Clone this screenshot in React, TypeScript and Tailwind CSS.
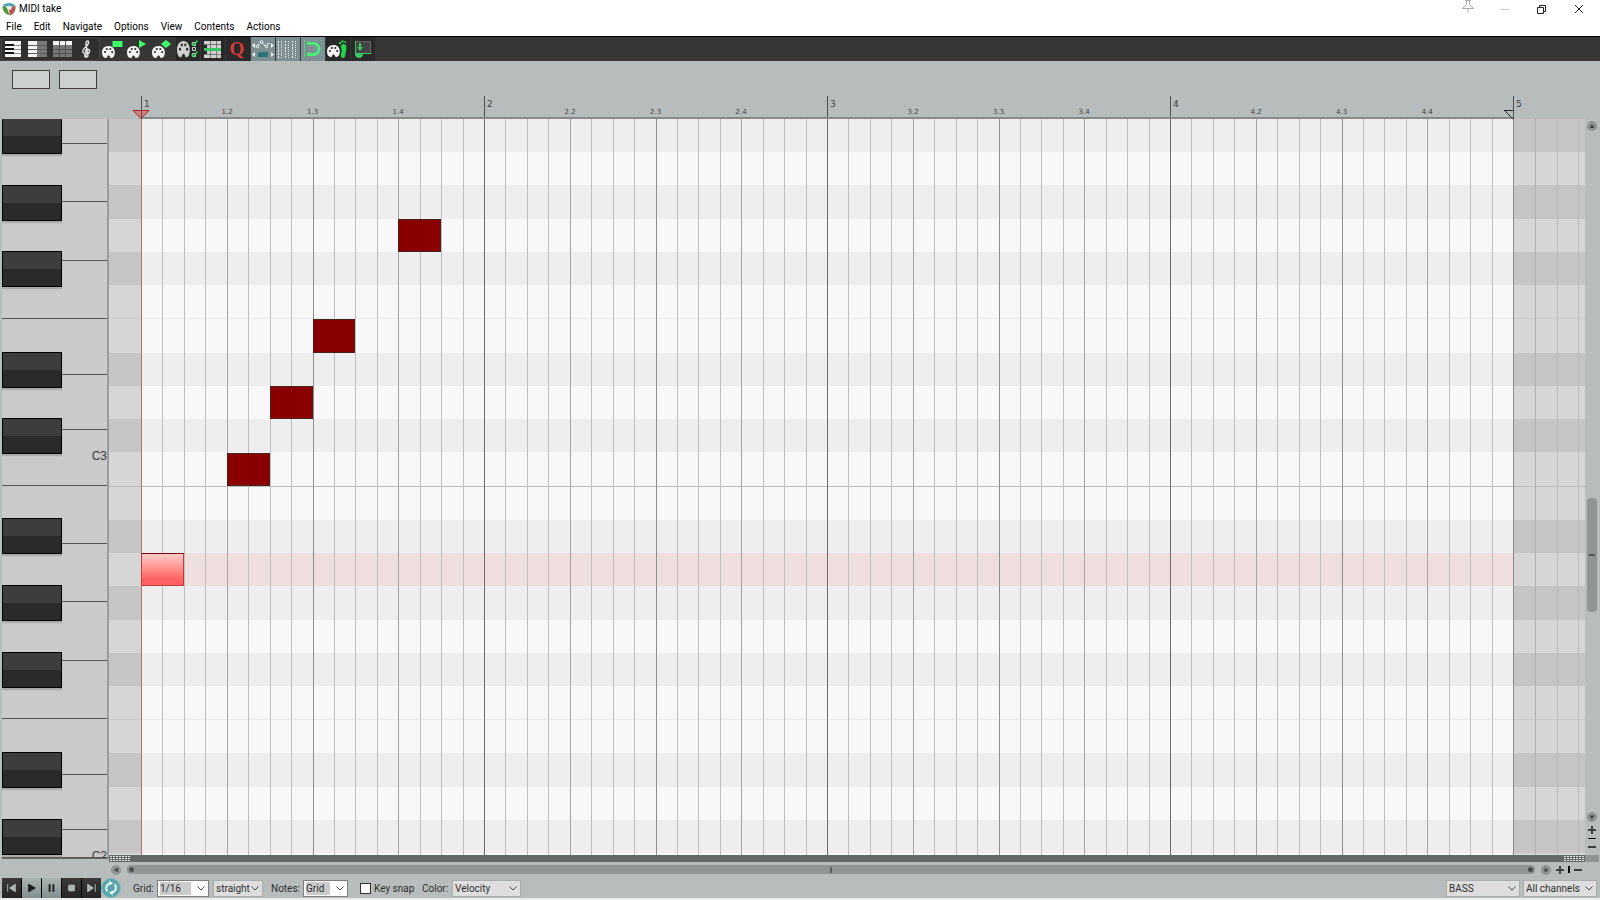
import React from 'react';

const MENUS = ['File', 'Edit', 'Navigate', 'Options', 'View', 'Contents', 'Actions'];

const BARS = [1, 2, 3, 4];
const STEPS_PER_BAR = 16;
const STEPS = BARS.length * STEPS_PER_BAR;

// Rows run downwards from A#3, 22 full semitones are in view
const ROW_COUNT = 22;
const BLACK_ROWS = [0, 2, 4, 7, 9, 12, 14, 16, 19, 21];
const SELECTED_ROW = 13;

interface Note {
  row: number;
  start: number;
  selected?: boolean;
}

const NOTES: Note[] = [
  { row: 13, start: 0, selected: true },
  { row: 10, start: 4 },
  { row: 8, start: 6 },
  { row: 6, start: 8 },
  { row: 3, start: 12 },
];

// Relative heights of the visible white keys
const WHITE_KEYS = [
  { size: 45, wide: false },
  { size: 105, wide: false },
  { size: 105, wide: false },
  { size: 105, wide: true },
  { size: 100, wide: false },
  { size: 100, wide: false },
  { size: 100, wide: true, label: 'C3' },
  { size: 105, wide: false },
  { size: 105, wide: false },
  { size: 105, wide: false },
  { size: 105, wide: true },
  { size: 100, wide: false },
  { size: 100, wide: false },
  { size: 50, wide: true, label: 'C2' },
];

function rowPercent(row: number) {
  return `${(row / ROW_COUNT) * 100}%`;
}

function Palette({ x = 0, y = 0, color = '#f4f4f4' }: { x?: number; y?: number; color?: string }) {
  return (
    <g transform={`translate(${x} ${y})`}>
      <path
        d="M6.5 0C2.6 0 0 2.8 0 6.3 0 9.7 1.500 12 3.600 12c2 0 1.200-2.600 2.900-2.600S7.600 12 9.500 12c2.200 0 3.300-2.500 3.300-5.700C12.800 2.700 10.400 0 6.500 0z"
        fill={color}
      />
      <circle cx="3" cy="6" r="1.100" fill="#2c2c2c" />
      <circle cx="4.800" cy="3" r="1.100" fill="#2c2c2c" />
      <circle cx="8.300" cy="3" r="1.100" fill="#2c2c2c" />
      <circle cx="10.200" cy="6" r="1.100" fill="#2c2c2c" />
    </g>
  );
}

interface Tool {
  name: string;
  active?: boolean;
  dark?: boolean;
  icon: React.ReactNode;
}

const VIEW_TOOLS: Tool[] = [
  {
    name: 'Piano roll',
    icon: (
      <>
        <path d="M4 4h16v16H4z" fill="#f5f5f5" />
        <path d="M4 8.500h16M4 12.500h16M4 16.500h16" stroke="#8a8a8a" />
        <path d="M4 7h9v2H4zM4 11h9v2H4zM4 15h9v2H4z" fill="#111" />
      </>
    ),
  },
  {
    name: 'Named notes',
    icon: (
      <>
        <path d="M2 4h9v16H2z" fill="#f5f5f5" />
        <path d="M11 4h10v16H11z" fill="#787878" />
        <path d="M2 8.500h19M2 12.500h19M2 16.500h19" stroke="#5c5c5c" />
      </>
    ),
  },
  {
    name: 'Event list',
    icon: (
      <>
        <path d="M2 4h19v16H2z" fill="#777" />
        <path d="M2 4h19v4H2z" fill="#f5f5f5" />
        <path d="M2 12.500h19M2 16.500h19M8.500 4v16M14.500 4v16" stroke="#505050" />
      </>
    ),
  },
  {
    name: 'Notation',
    icon: (
      <g fill="none" stroke="#e6e6e6" strokeWidth="1.400" strokeLinecap="round">
        <path d="M9 19.500c1.400 1.400 3.300.4 2.900-1.500L10 7.500c-.5-3 2.300-5.200 2.600-2.300.3 3.500-5.800 5.300-5.800 9 0 3.500 6.800 3.300 6.800.1 0-2.800-4.300-2.700-4.200-.2 0 .8.400 1.300 1 1.600" />
        <circle cx="9.300" cy="18.700" r=".7" />
      </g>
    ),
  },
];

const TOOLS: Tool[] = [
  {
    name: 'Color notes',
    icon: (
      <>
        <Palette x={1} y={9} />
        <path d="M11.500 4h10v6h-10z" fill="#3dff6a" />
      </>
    ),
  },
  {
    name: 'Color by velocity',
    icon: (
      <>
        <Palette x={1} y={9} />
        <path d="M13 3l7 4-7 4z" fill="#3dff6a" />
      </>
    ),
  },
  {
    name: 'Color by shape',
    icon: (
      <>
        <Palette x={1} y={9} />
        <path d="M10 7l5-4 5 4-5 4z" fill="#3dff6a" />
      </>
    ),
  },
  {
    name: 'Color options',
    dark: true,
    icon: (
      <>
        <g transform="translate(1 0) scale(1 1.350)">
          <Palette x={0} y={3} color="#cfcfcf" />
        </g>
        <path d="M16.500 5.500h3v3h-3zM16.500 10.500h3v3h-3zM16.500 16.500h3v3h-3z" fill="none" stroke="#cfcfcf" />
        <path d="M15.500 6.500l2 2 4-5M15.500 17.500l2 2 4-5" fill="none" stroke="#20d84c" strokeWidth="1.500" />
      </>
    ),
  },
  {
    name: 'Filter events',
    dark: true,
    icon: (
      <>
        <path d="M3 4h17v4H3zM6 8h14v3H6zM6 14h14v3H6zM3 17h17v4H3z" fill="#d0d0d0" />
        <path d="M3 7.500h17M3 17.500h17M9.500 4v17M15.500 4v17" stroke="#777" />
        <path d="M3 11h17v3H3z" fill="#34c561" />
      </>
    ),
  },
  {
    name: 'Quantize',
    dark: true,
    icon: (
      <text x="11" y="18" textAnchor="middle" fontSize="19" fontWeight="bold" fontFamily="Liberation Serif, serif" fill="#d93a3a">
        Q
      </text>
    ),
  },
  {
    name: 'Move CC with notes',
    active: true,
    icon: (
      <>
        <path d="M5.500 9.500l5-5 4 5 2-3h2" fill="none" stroke="#f1f5f5" />
        <g fill="#84969a" stroke="#f1f5f5">
          <circle cx="6.500" cy="9.500" r="1.300" />
          <circle cx="10.500" cy="5" r="1.300" />
          <circle cx="15.500" cy="9.500" r="1.300" />
        </g>
        <path d="M4 6v5L1 8.500zM20 6v5l3-2.500zM4 15v5l-3-2.500zM20 15v5l3-2.500z" fill="#f1f5f5" />
        <path d="M7 15h10v5H7z" fill="#2b7476" />
      </>
    ),
  },
  {
    name: 'Grid lines',
    active: true,
    icon: (
      <>
        <path d="M2.500 4v17M9.500 4v17M16.500 4v17" stroke="#edf1f1" strokeDasharray="2 1" />
        <path d="M5.500 4v17M12.500 4v17M19.500 4v17" stroke="#dce4e4" strokeDasharray="1 1" />
      </>
    ),
  },
  {
    name: 'Snap to grid',
    active: true,
    icon: (
      <>
        <path d="M3.500 3v18" stroke="#45ef78" strokeDasharray="2 1" />
        <path d="M8.500 3v18M14.500 3v18M20.500 3v18" stroke="#9bb0ae" strokeDasharray="1 2" />
        <path d="M6 6.500h6.500a5.500 5.500 0 0 1 0 11H6" fill="none" stroke="#45ef78" strokeWidth="3" />
      </>
    ),
  },
  {
    name: 'Step input',
    dark: true,
    icon: (
      <>
        <Palette x={1} y={8} />
        <path d="M15.500 8c2-2 5-.5 5 2.500 0 3-1 4-1 6.500s-1 4-2.500 4-2.500-2-2-4 1-3 .5-5-1-3 0-4z" fill="#20d84c" />
        <circle cx="14" cy="6" r="1.200" fill="#20d84c" />
        <circle cx="16.500" cy="4.500" r="1.200" fill="#20d84c" />
        <circle cx="19.300" cy="5.300" r="1" fill="#20d84c" />
      </>
    ),
  },
  {
    name: 'Dock editor',
    dark: true,
    icon: (
      <>
        <path d="M4.500 4.500h15v12h-15z" fill="#444" stroke="#666" />
        <path d="M4.500 4v12.500H20" fill="none" stroke="#35c861" />
        <path d="M8 6h2v4h2l-3 4-3-4h2z" fill="#35c861" />
        <path d="M4 17h8c0 2.500-2 4-4 4s-4-1.500-4-4z" fill="#35c861" />
      </>
    ),
  },
];

function ToolButton({ tool }: { tool: Tool }) {
  const bg = tool.active ? 'bg-[#7d8f92]' : tool.dark ? 'bg-[#292929]' : '';
  return (
    <button aria-label={tool.name} className={`w-6 h-6 shrink-0 ${bg}`}>
      <svg viewBox="0 0 24 24" className="w-6 h-6">{tool.icon}</svg>
    </button>
  );
}

function TitleBar() {
  return (
    <header className="bg-white text-black">
      <div className="flex items-center h-[18px] pl-0.5 pr-0.5">
        <svg viewBox="0 0 14 14" className="w-[14px] h-[14px]">
          <path d="M1 3.500C3 0 11 0 13 3.500L10 6 7 4.500 3 6z" fill="#4aa3b5" />
          <path d="M.5 4L5 5.500 7.500 13.500C3 12 0 8 .5 4z" fill="#4f9b35" />
          <path d="M13.500 4L6 5.500l2 8C12 12 14 8 13.500 4z" fill="#b9534c" />
          <path d="M3.500 4.500l4-1 3 2-3 3z" fill="#e8eeee" />
        </svg>
        <h1 className="ml-[3px] text-[10px] leading-4">MIDI take</h1>
        <div className="ml-auto flex items-center h-full">
          <button aria-label="Pin window" className="w-9 h-full flex justify-center">
            <svg viewBox="0 0 14 14" className="w-[14px] h-[14px]" fill="none" stroke="#aaa">
              <path d="M4 .5h6M5.500.5v4L1.500 8.500h11l-4-4v-4M7 9v4" />
            </svg>
          </button>
          <button aria-label="Minimize" className="w-9 h-full flex items-center justify-center">
            <span className="w-[9px] h-px bg-[#c8c8c8]" />
          </button>
          <button aria-label="Restore" className="w-[38px] h-full flex items-center justify-center">
            <svg viewBox="0 0 10 10" className="w-[10px] h-[10px]" fill="none" stroke="#222">
              <path d="M1.500 3.500h6v6h-6zM3.500 3.500v-2h6v6h-2" />
            </svg>
          </button>
          <button aria-label="Close" className="w-[38px] h-full flex items-center justify-center">
            <svg viewBox="0 0 10 10" className="w-[10px] h-[10px]" fill="none" stroke="#222">
              <path d="M1 1l8 8M9 1L1 9" />
            </svg>
          </button>
        </div>
      </div>
      <nav className="flex gap-3 h-[18px] pl-1.5 text-[10px] leading-[18px]">
        {MENUS.map(menu => (
          <button key={menu}>{menu}</button>
        ))}
      </nav>
    </header>
  );
}

function Toolbar() {
  return (
    <div className="flex items-center gap-px h-[25px] pl-px bg-[#363636] border-t border-black">
      <div className="flex gap-px rounded-sm bg-[#303030] ring-1 ring-inset ring-[#484848]">
        {VIEW_TOOLS.map(tool => (
          <ToolButton key={tool.name} tool={tool} />
        ))}
      </div>
      {TOOLS.map(tool => (
        <ToolButton key={tool.name} tool={tool} />
      ))}
    </div>
  );
}

function Ruler() {
  return (
    <div className="flex pl-[141px] text-[#3e4242] font-['DejaVu_Sans',sans-serif]">
      <div className="relative flex flex-1 h-[23px] border-b-2 border-[#858b8a]">
        {BARS.map(bar => (
          <div key={bar} className="grid grid-cols-4 flex-1 border-l border-[#4b4f4f]">
            <span className="pl-0.5 text-[9px] leading-4">{bar}</span>
            {[2, 3, 4].map(beat => (
              <span key={beat} className="-ml-1.5 pt-[11px] text-[7px] leading-[10px]">
                {bar}.{beat}
              </span>
            ))}
          </div>
        ))}
        <svg viewBox="0 0 18 9" className="absolute -left-[9px] top-[14px] w-[18px] h-[9px]">
          <path d="M1 .5h16L9 8.500z" fill="#c98888" stroke="#a82222" />
          <path d="M9.500 0v9" stroke="#7c3b3b" />
        </svg>
        <svg viewBox="0 0 9 9" className="absolute right-0 top-[14px] w-[9px] h-[9px]" fill="none">
          <path d="M0 .5h9M1 1l8 8" stroke="#222" />
        </svg>
      </div>
      <span className="w-[87px] h-[23px] border-l border-[#4b4f4f] pl-0.5 text-[9px] leading-4">5</span>
    </div>
  );
}

function Keyboard() {
  return (
    <div className="w-[109px] shrink-0 pl-0.5 pb-[3px]">
      <div className="relative flex flex-col h-full overflow-hidden bg-[#cacaca] border-r-2 border-b border-[#999d9d] border-b-[#666]">
        <div className="flex flex-col flex-1">
          {WHITE_KEYS.map((key, i) => (
            <div
              key={i}
              style={{ flexGrow: key.size }}
              className={`basis-0 min-h-0 flex justify-end ${key.wide ? '' : 'pl-[60px]'}`}
            >
              <div className="flex-1 border-b border-[#555] text-right pt-[14px] text-[12px] leading-6 text-[#3a3a3a] h-full overflow-hidden font-['Liberation_Sans',sans-serif]">
                {key.label}
              </div>
            </div>
          ))}
        </div>
        <div className="absolute left-0 -top-px bottom-[6px] w-[60px]">
          {BLACK_ROWS.map(row => (
            <div
              key={row}
              style={{ top: rowPercent(row) }}
              className="absolute w-full h-9 border border-black bg-linear-to-b from-[#3d3d3d] from-50% to-[#2a2a2a] to-50% shadow-[0_2px_1px_#aaaaaa]"
            />
          ))}
        </div>
      </div>
    </div>
  );
}

function rowLine(row: number) {
  if (row === 10) return 'border-b border-[#bdbdbd]';
  if (row === 5 || row === 17) return 'border-b border-black/5';
  return '';
}

function PitchRows({ outside }: { outside?: boolean }) {
  return (
    <div className="absolute inset-0 flex flex-col">
      {Array.from({ length: ROW_COUNT }, (_, row) => {
        const black = BLACK_ROWS.includes(row);
        let bg = black ? 'bg-[#eeeeee]' : 'bg-[#f8f8f8]';
        if (outside) bg = black ? 'bg-[#c5c5c5]' : 'bg-[#d6d6d6]';
        else if (row === SELECTED_ROW) bg = 'bg-[#efdede]';
        return <div key={row} className={`flex-1 ${bg} ${rowLine(row)}`} />;
      })}
      <div className={`h-0.5 ${outside ? 'bg-[#d6d6d6]' : 'bg-[#f8f8f8]'}`} />
    </div>
  );
}

function stepLine(step: number) {
  if (step === 0) return 'border-[#c26a6a]';
  if (step % STEPS_PER_BAR === 0) return 'border-[#6c6c6c]';
  if (step % 8 === 0) return 'border-[#8e8e8e]';
  if (step % 4 === 0) return 'border-[#a4a4a4]';
  return 'border-[#bebebe]';
}

function NoteGrid() {
  return (
    <div className="flex flex-1">
      <div className="relative w-8">
        <PitchRows outside />
      </div>
      <div className="relative flex-1">
        <PitchRows />
        <div className="absolute inset-0 flex">
          {Array.from({ length: STEPS }, (_, step) => (
            <div key={step} className={`flex-1 border-l ${stepLine(step)}`} />
          ))}
        </div>
        <div className="absolute inset-x-0 top-0 bottom-0.5">
          {NOTES.map(note => (
            <div
              key={note.row}
              style={{
                left: `${(note.start / STEPS) * 100}%`,
                top: rowPercent(note.row),
                width: `${(2 / STEPS) * 100}%`,
                height: rowPercent(1),
              }}
              className={`absolute border ${
                note.selected
                  ? 'border-[#c33a3a] border-t-[#7c0000] bg-linear-to-b from-[#ffcaca] to-[#ff6262] to-80%'
                  : 'border-[#4a2020] bg-[#8a0000]'
              }`}
            />
          ))}
        </div>
      </div>
      <div className="relative w-[72px]">
        <PitchRows outside />
        <div className="absolute inset-0 flex border-l border-[#8c8c8c]">
          <div className="w-[21px]" />
          <div className="w-[22px] border-l border-[#b0b0b0]" />
          <div className="w-[21px] border-l border-[#b9b9b9]" />
          <div className="flex-1 border-l border-[#b9b9b9]" />
        </div>
      </div>
    </div>
  );
}

const ARROWS = {
  up: 'M5 3l2.500 4h-5z',
  down: 'M5 7.500L2.500 3.500h5z',
  left: 'M3 5l4-2.500v5z',
  right: 'M7.500 5l-4-2.500v5z',
};

function ScrollArrow({ dir }: { dir: keyof typeof ARROWS }) {
  return (
    <button aria-label={`Scroll ${dir}`} className="w-[10px] h-[10px] shrink-0 rounded-full bg-[#8f9594]">
      <svg viewBox="0 0 10 10" className="w-[10px] h-[10px]">
        <path d={ARROWS[dir]} fill="#444" />
      </svg>
    </button>
  );
}

function ZoomButton({ sign }: { sign: 'in' | 'out' }) {
  return (
    <button aria-label={`Zoom ${sign}`} className="w-2 h-2 shrink-0">
      <svg viewBox="0 0 8 8" className="w-2 h-2" stroke="#3b3f3f" strokeWidth="2">
        <path d={sign === 'in' ? 'M0 4h8M4 0v8' : 'M0 4h8'} />
      </svg>
    </button>
  );
}

function VerticalScroll() {
  return (
    <div className="flex flex-col items-center w-[15px] shrink-0 pt-0.5 pr-px">
      <ScrollArrow dir="up" />
      <div className="flex flex-col flex-1 items-center">
        <div className="grow-[369]" />
        <div className="grow-[112] w-[10px] rounded-[4px] bg-[#8f9594] flex items-center justify-center">
          <span className="w-1.5 h-0.5 bg-[#555]" />
        </div>
        <div className="grow-[201]" />
      </div>
      <ScrollArrow dir="down" />
      <div className="flex flex-col items-center gap-1 pt-1 pb-1">
        <ZoomButton sign="in" />
        <span className="w-2 h-px bg-black" />
        <ZoomButton sign="out" />
      </div>
      <div className="w-full h-[7px] bg-[#8f9594]" />
    </div>
  );
}

function Grip() {
  return (
    <svg viewBox="0 0 20 5" className="w-5 h-[5px]">
      <path d="M0 .5h20M0 2.500h20M0 4.500h20" stroke="#e4e4e4" strokeDasharray="2 1" />
    </svg>
  );
}

function HorizontalScroll() {
  return (
    <div className="flex items-center h-[15px] pl-[111px] pr-[18px]">
      <ScrollArrow dir="left" />
      <div className="ml-1.5 mr-1 flex-1 h-[9px] px-0.5 rounded-[4px] bg-[#8f9594] flex items-center justify-between">
        <span className="w-[5px] h-[5px] rounded-full bg-[#4a4e4e]" />
        <span className="w-0.5 h-1.5 bg-[#5c6060]" />
        <span className="w-[5px] h-[5px] rounded-full bg-[#4a4e4e]" />
      </div>
      <div className="flex items-center gap-1 pl-0.5">
        <ScrollArrow dir="right" />
        <div className="flex items-center gap-1 pl-px">
          <ZoomButton sign="in" />
          <span className="w-0.5 h-[7px] bg-black" />
          <ZoomButton sign="out" />
        </div>
      </div>
    </div>
  );
}

function Chevron() {
  return (
    <svg viewBox="0 0 8 5" className="w-2 h-[5px] shrink-0 pointer-events-none" fill="none" stroke="#444">
      <path d="M.5.5L4 4 7.500.5" />
    </svg>
  );
}

interface DropProps {
  label: string;
  value: string;
  width: string;
  editable?: boolean;
}

function Drop({ label, value, width, editable }: DropProps) {
  return (
    <div
      className={`flex items-center h-[17px] border ${width} ${
        editable ? 'bg-white border-[#7d7d7d] pl-0.5 pr-[3px] gap-1.5' : 'bg-[#dedede] border-[#a9adad] pl-0.5 pr-[3px]'
      }`}
    >
      <select
        aria-label={label}
        className={`appearance-none flex-1 min-w-0 h-[13px] leading-[13px] outline-none ${editable ? 'bg-[#cbcbcb]' : ''}`}
      >
        <option>{value}</option>
      </select>
      <Chevron />
    </div>
  );
}

const TRANSPORT = [
  { name: 'Go to start', light: false, path: 'M6 6v8M14 6v8l-6-4z' },
  { name: 'Play', light: true, path: 'M7 6l7 4-7 4z' },
  { name: 'Pause', light: true, path: 'M8 6v8M12 6v8' },
  { name: 'Stop', light: false, path: 'M7 7h6v6H7z' },
  { name: 'Go to end', light: false, path: 'M14 6v8M6 6v8l6-4z' },
];

function BottomBar() {
  return (
    <footer className="flex items-center h-[21px] pl-0.5 pr-[3px] pt-px text-[10px] text-[#2e2e2e]">
      <div className="flex bg-black gap-px">
        {TRANSPORT.map(({ name, light, path }) => (
          <button
            key={name}
            aria-label={name}
            className={`w-[19px] h-5 bg-linear-to-b ${light ? 'from-[#a9b3b2] to-[#829090]' : 'from-[#3a3a3a] to-[#252525]'}`}
          >
            <svg viewBox="0 0 20 20" className="w-[19px] h-5">
              <path
                d={path}
                fill={light ? '#1c1c1c' : '#b0b6b6'}
                stroke={light ? '#1c1c1c' : '#b0b6b6'}
                strokeWidth={name === 'Pause' ? 2 : 1}
              />
            </svg>
          </button>
        ))}
      </div>
      <button aria-label="Toggle repeat" className="w-5 h-5 rounded-full bg-[#56a5a9] border border-[#84b9bb]">
        <svg viewBox="0 0 18 18" className="w-[18px] h-[18px]" fill="none" stroke="#e4f3f3" strokeWidth="2">
          <path d="M5.500 12.500A5 5 0 0 1 8 4.200M12.500 5.500A5 5 0 0 1 10 13.800" />
          <path d="M7 1.500l4 2.700-4 2.300zM11 11.500l-4 2.300 4 2.700z" fill="#e4f3f3" stroke="none" />
        </svg>
      </button>
      <span className="w-9 pl-3">Grid:</span>
      <Drop label="Grid size" value="1/16" width="w-[52px]" editable />
      <div className="ml-1">
        <Drop label="Grid type" value="straight" width="w-[50px]" />
      </div>
      <span className="w-10 pl-2">Notes:</span>
      <Drop label="Note length" value="Grid" width="w-[45px]" editable />
      <label className="ml-3 w-[62px] flex items-center gap-[3px] whitespace-nowrap">
        <input type="checkbox" className="appearance-none w-[11px] h-[11px] bg-white border border-[#333]" />
        Key snap
      </label>
      <span className="w-[30px]">Color:</span>
      <Drop label="Note color" value="Velocity" width="w-[69px]" />
      <div className="ml-auto flex gap-[3px]">
        <Drop label="Track" value="BASS" width="w-[74px]" />
        <Drop label="Channel" value="All channels" width="w-[74px]" />
      </div>
    </footer>
  );
}

export default function App() {
  return (
    <div className="flex flex-col h-screen overflow-hidden bg-[#b7bdbd] font-[Roboto,'Open_Sans',sans-serif]">
      <TitleBar />
      <Toolbar />
      <div className="flex gap-[9px] pl-3 pt-[9px] pb-[7px]">
        <div className="w-[38px] h-[19px] bg-[#ccd0ce] border border-[#3c3c3c]" />
        <div className="w-[38px] h-[19px] bg-[#ccd0ce] border border-[#3c3c3c]" />
      </div>
      <Ruler />
      <main className="flex flex-1 min-h-0">
        <Keyboard />
        <div className="flex flex-col flex-1">
          <NoteGrid />
          <div className="flex items-center justify-between h-[7px] px-px bg-[#646a69]">
            <Grip />
            <Grip />
          </div>
        </div>
        <VerticalScroll />
      </main>
      <HorizontalScroll />
      <BottomBar />
      <div className="h-0.5 bg-[#ececec]" />
    </div>
  );
}
